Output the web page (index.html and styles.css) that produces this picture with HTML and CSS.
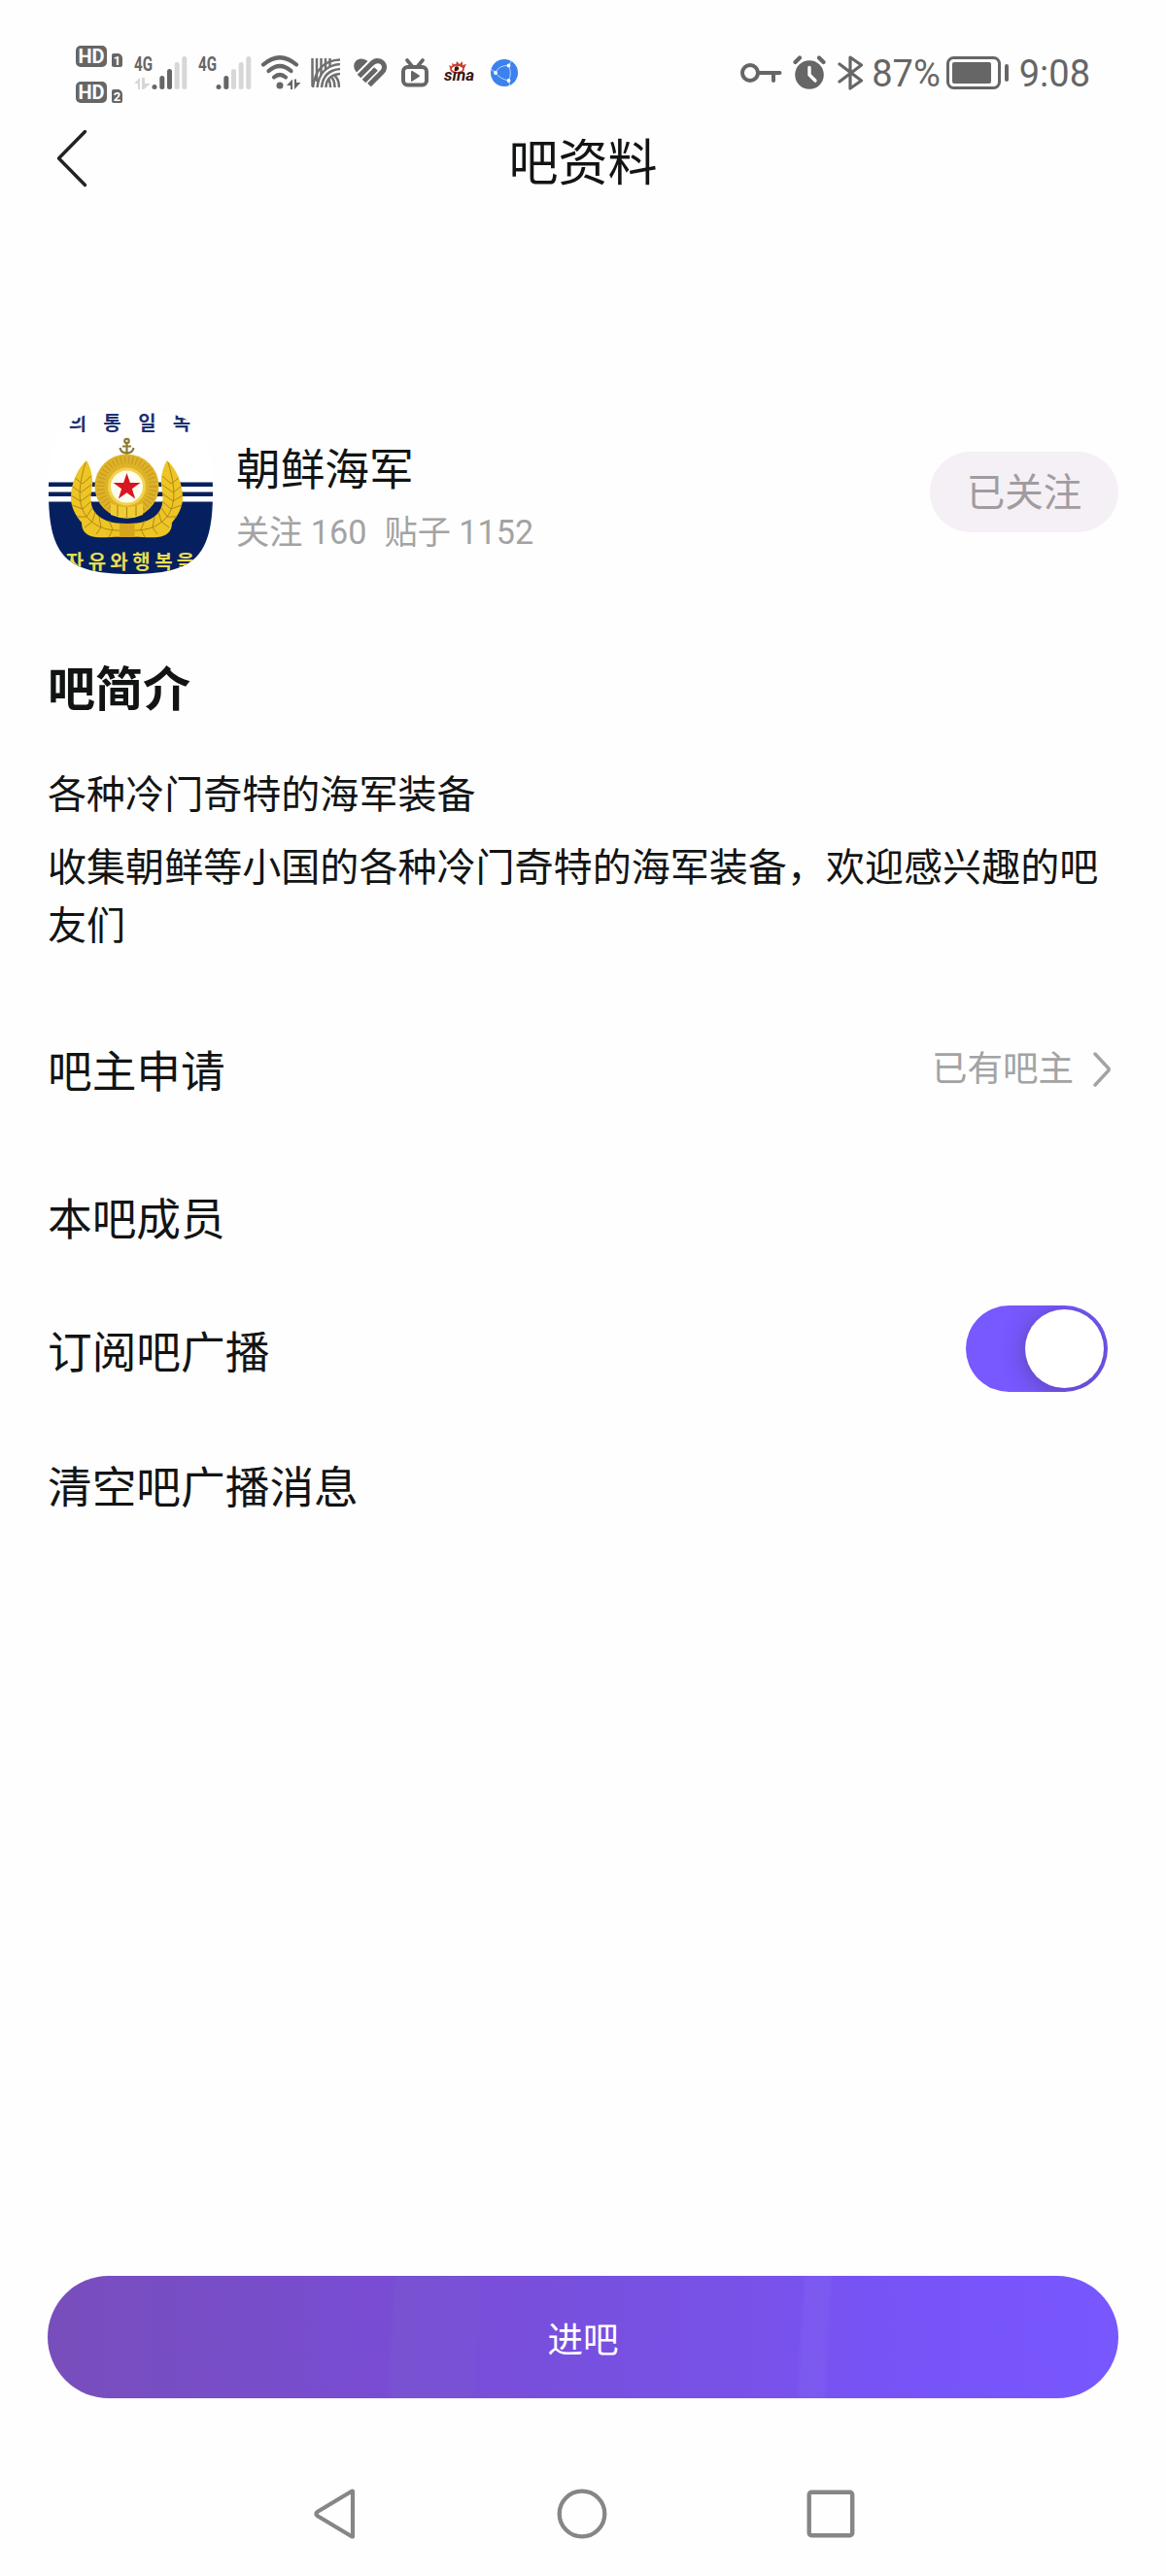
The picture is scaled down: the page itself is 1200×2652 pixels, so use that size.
FILE: index.html
```html
<!DOCTYPE html>
<html lang="zh-CN">
  <head>
    <meta charset="UTF-8" />
    <meta name="viewport" content="width=device-width, initial-scale=1.0" />
    <title>吧资料</title>
    <link rel="stylesheet" href="styles.css" />
  </head>
  <body>
    <div class="screen">
      <div class="status-bar">
        <div class="status-left">
          <div class="hd-list">
            <div class="hd-row"><span class="hd">HD</span><span class="sim">1</span></div>
            <div class="hd-row"><span class="hd">HD</span><span class="sim">2</span></div>
          </div>
          <svg class="signal" width="56" height="36" viewBox="0 0 56 36">
            <text class="net" x="0" y="16" textLength="19" lengthAdjust="spacingAndGlyphs">4G</text>
            <path class="faint" d="M0 29l6-6v12H4v-6zM8 23h3v6h6l-7 6H8z" />
            <circle cx="21" cy="32.5" r="2.5" />
            <rect x="26.300" y="21" width="5" height="14" rx="2.500" />
            <rect x="34" y="14" width="5" height="21" rx="2.500" />
            <rect class="faint" x="41.700" y="7" width="5" height="28" rx="2.500" />
            <rect class="faint" x="49.300" y="1" width="5" height="34" rx="2.500" />
          </svg>
          <svg class="signal second" width="56" height="36" viewBox="0 0 56 36">
            <text class="net" x="0" y="16" textLength="19" lengthAdjust="spacingAndGlyphs">4G</text>
            <circle cx="21" cy="32.5" r="2.5" />
            <rect x="26.300" y="21" width="5" height="14" rx="2.500" />
            <rect class="faint" x="34" y="14" width="5" height="21" rx="2.500" />
            <rect class="faint" x="41.700" y="7" width="5" height="28" rx="2.500" />
            <rect class="faint" x="49.300" y="1" width="5" height="34" rx="2.500" />
          </svg>
          <svg class="wifi" width="42" height="36" viewBox="0 0 42 36">
            <g fill="none" stroke="#666" stroke-width="4.200" stroke-linecap="round">
              <path d="M3 9.500Q20-5 37 9.500" />
              <path d="M8.500 16Q20 6 31.500 16" />
              <path d="M14 22.500Q20 17.500 26 22.500" />
            </g>
            <circle cx="20" cy="31" r="3.500" />
            <path d="M27 31l6-6.500V35h-2v-4zM35 24.500h2V28h4.500L35 35z" />
          </svg>
          <!-- woven K -->
          <svg class="app-k" width="30" height="30" viewBox="0 0 30 30">
            <g fill="none" stroke="#707070" stroke-width="2.500">
              <path d="M1.500 0v29M6 0v24M10.500 0v17M15 0v12M19.500 0v8" />
              <path d="M2 30C4 12 14 2 30 1.500M6.500 30C8 16 16 7 30 6M11 30C12 19 18 12 30 11M15.500 30c0-8 5-13 14.500-14" />
              <path d="M20 30c0-4-.500-6-1.500-8M24.500 30c0-5-1-8-3-10M29 30c0-6-2-10-4.500-12" />
            </g>
          </svg>
          <svg class="app-heart" width="34" height="30" viewBox="0 0 34 30">
            <path d="M3 14.500C-2 9 0 1 7.500 .500c3 0 5 1 7 2.500z" />
            <g fill="none" stroke="#666" stroke-width="5.200">
              <path d="M5.500 18.500L18 6c4-4.500 9-4 11.500-1.500s3 6.500-.500 10L16 27.500" />
              <path d="M10.500 23.500L23 11" />
            </g>
          </svg>
          <svg class="app-tv" width="28" height="30" viewBox="0 0 28 30">
            <rect x="2" y="9" width="24" height="18.500" rx="4.500" fill="none" stroke="#666" stroke-width="4" />
            <path d="M6 2l5 6M22 2l-5 6" stroke="#666" stroke-width="3.600" stroke-linecap="round" />
            <path d="M10 14v9q0 1.500 1.500.500l7-4.500q1-1 0-1.500l-7-4.500q-1.500-.500-1.500 1z" />
          </svg>
          <svg class="app-sina" width="32" height="30" viewBox="0 0 32 30">
            <path d="M7 12L5 7l4 2-1-4 4 2 1-4 3 3 3-3v4l4-1-2 4z" fill="#c9402f" />
            <ellipse cx="13.500" cy="11" rx="6.500" ry="4" fill="#fff" stroke="#c9402f" stroke-width="1.800" />
            <circle cx="13" cy="10.500" r="2.200" fill="#3c1512" />
            <text class="sina-text" x="0" y="22.500" textLength="31" lengthAdjust="spacingAndGlyphs">sina</text>
          </svg>
          <svg class="app-globe" width="28" height="28" viewBox="0 0 28 28">
            <circle cx="14" cy="14" r="14" fill="#3c82ee" />
            <path d="M5 14Q8 6 18.500 6.500 22 14 18.500 22 9 20 5 14M0 10l5 4M18.500 6.500L21 2M18.500 22l1 5" fill="none" stroke="#b9d6fb" stroke-width="1" />
            <g fill="#fff"><circle cx="5" cy="14" r="1.900" /><circle cx="18.500" cy="6.500" r="1.900" /><circle cx="18.500" cy="22" r="1.900" /></g>
          </svg>
        </div>
        <div class="status-right">
          <svg width="43" height="22" viewBox="0 0 43 22">
            <g fill="none" stroke="#666" stroke-width="4" stroke-linecap="round">
              <circle cx="10" cy="11" r="8" />
              <path d="M19 11h21.500M34 12v7" />
            </g>
          </svg>
          <svg class="alarm" width="34" height="36" viewBox="0 0 34 36">
            <circle cx="17" cy="20" r="14.800" />
            <path d="M2.500 7L7 2.500M31.500 7L27 2.500" stroke="#666" stroke-width="4.200" stroke-linecap="round" />
            <path d="M17 12.500V20l6 6" fill="none" stroke="#fff" stroke-width="3.400" stroke-linecap="round" />
          </svg>
          <svg class="bluetooth" width="28" height="36" viewBox="0 0 28 36">
            <path d="M2 9l22.500 17L13 34V2l11.500 8L2 27" fill="none" stroke="#666" stroke-width="3.200" stroke-linejoin="round" stroke-linecap="round" />
          </svg>
          <span class="status-text percent">87%</span>
          <svg class="battery" width="64" height="34" viewBox="0 0 64 34">
            <rect x="1.500" y="1.500" width="53" height="31" rx="6" fill="none" stroke="#666" stroke-width="3" />
            <rect x="6" y="6" width="40" height="22" rx="2" />
            <rect x="60" y="8" width="4" height="18" rx="2" />
          </svg>
          <span class="status-text">9:08</span>
        </div>
      </div>

      <div class="header">
        <svg class="back" width="34" height="62" viewBox="0 0 34 62">
          <path d="M30.500 3.500L3.500 31l27 27.500" fill="none" stroke="#222" stroke-width="3.400" stroke-linecap="round" stroke-linejoin="round" />
        </svg>
        <h1 class="title">吧资料</h1>
      </div>

      <div class="profile">
        <svg class="avatar" width="169" height="169" viewBox="0 0 169 169">
          <defs>
            <clipPath id="squircle">
              <path d="M0 84.500C0 18.200 18.200 0 84.500 0S169 18.200 169 84.500 150.800 169 84.500 169 0 150.800 0 84.500z" />
            </clipPath>
          </defs>
          <g clip-path="url(#squircle)">
            <rect width="169" height="169" fill="#fff" />
            <path d="M0 74.500h169v4.500H0zM0 84.500h169v4.500H0zM0 94.500h169V169H0z" fill="#06205f" />
            <g class="flag-text navy">
              <text x="30" y="20.500">의</text>
              <text x="65.500" y="20.500">통</text>
              <text x="101.500" y="20.500">일</text>
              <text x="137" y="20.500">녹</text>
            </g>
            <!-- anchor -->
            <g fill="none" stroke="#8d7a35" stroke-width="2.200">
              <circle cx="80.500" cy="32" r="2.200" />
              <path d="M80.500 34v12M76 37.500h9M73.500 39q1 5.500 7 5.500t7-5.500" />
            </g>
            <!-- wreath -->
            <g id="wreath">
              <path d="M39 52C29 61 23 76 23 91c0 8 4 17 11 25 0 9 5 14 15 15 10 1 20-1 31 0v-14c-15 0-24-3-31-10-7-8-6-18-4-29 1-9-2-20-6-26z" fill="#edc524" />
              <g fill="none" stroke="#b0861a" stroke-width="1">
                <path d="M38 54C29 84 28 108 52 120q10 5 28 4" />
                <path d="M27 70l8 6 9-8M25 79l8 6 11-8M23 88l10 6 11-8M24 98l11 4 9-8M29 110l10 0 6-9M37 121l8-6 3-10M49 128l5-7-2-11M62 131l4-8-4-9" />
              </g>
            </g>
            <use href="#wreath" transform="matrix(-1 0 0 1 161 0)" />
            <rect x="73" y="117" width="15.500" height="14" fill="#d6a51d" />
            <circle cx="80.500" cy="78.500" r="33" fill="#dfb328" />
            <circle cx="80.500" cy="78.500" r="27" fill="none" stroke="#cc9f24" stroke-width="8" stroke-dasharray="1.500 2.500" />
            <path d="M64 96q16 8 33 0v12q-16 7-33 0z" fill="#f1cd35" />
            <path d="M71 98v11M80.500 100v11M90 98v11" stroke="#b48818" stroke-width="1.200" />
            <circle cx="80.500" cy="79" r="18" fill="#fffdf1" stroke="#f3d34e" stroke-width="3" />
            <path d="M80.500 65l3.400 10h10.600l-8.600 6.300 3.300 10.200-8.700-6.200-8.700 6.200 3.300-10.200L66.500 75h10.600z" fill="#d81521" />
            <g class="flag-text yellow">
              <text x="27" y="163.500">자</text>
              <text x="50" y="163.500">유</text>
              <text x="72.500" y="163.500">와</text>
              <text x="95.500" y="163.500">행</text>
              <text x="118.500" y="163.500">복</text>
              <text x="141" y="163.500">을</text>
            </g>
          </g>
        </svg>
        <div class="profile-info">
          <div class="name">朝鲜海军</div>
          <div class="meta"><span>关注 160</span><span>贴子 1152</span></div>
        </div>
        <button class="follow">已关注</button>
      </div>

      <div class="intro">
        <h2>吧简介</h2>
        <p>各种冷门奇特的海军装备</p>
        <p>收集朝鲜等小国的各种冷门奇特的海军装备，欢迎感兴趣的吧友们</p>
      </div>

      <div class="list">
        <div class="row apply">
          <span>吧主申请</span>
          <span class="row-value">
            已有吧主
            <svg width="20" height="38" viewBox="0 0 20 38">
              <path d="M3 3l13.500 14.500q1.500 1.500 0 3L3 35" fill="none" stroke="#a3a3a3" stroke-width="3.400" stroke-linecap="round" />
            </svg>
          </span>
        </div>
        <div class="row members"><span>本吧成员</span></div>
        <div class="row subscribe">
          <span>订阅吧广播</span>
          <span class="toggle"><span class="knob"></span></span>
        </div>
        <div class="row clear"><span>清空吧广播消息</span></div>
      </div>

      <button class="enter">进吧</button>

      <div class="nav-bar">
        <svg width="46" height="54" viewBox="0 0 46 54">
          <path d="M42 4v46q0 1-1.500 0L5.500 29q-2-2 0-4L40.500 4q1.500-1 1.500 0z" fill="none" stroke="#868686" stroke-width="4.200" stroke-linejoin="round" />
        </svg>
        <svg width="52" height="52" viewBox="0 0 52 52">
          <circle cx="26" cy="26" r="23.300" fill="none" stroke="#868686" stroke-width="4.300" />
        </svg>
        <svg width="50" height="50" viewBox="0 0 50 50">
          <rect x="2.700" y="2.700" width="44.500" height="44.500" rx="2.500" fill="none" stroke="#868686" stroke-width="4.400" />
        </svg>
      </div>
    </div>
  </body>
</html>
```
FILE: styles.css
```css
body {
  margin: 0;
  background-color: #fefefe;
  color: #121414;
  font-family: Roboto, "Noto Sans CJK SC", sans-serif;
}

h1,
h2,
p {
  margin: 0;
}

button {
  border: none;
  padding: 0;
  font-family: inherit;
}

svg {
  display: block;
  flex-shrink: 0;
}

.screen {
  display: flex;
  flex-direction: column;
  width: 1200px;
  height: 2652px;
}

/* status bar */
.status-bar {
  display: flex;
  justify-content: space-between;
  height: 90px;
  padding: 30px 78px 0;
  color: #666;
  fill: #666;
}

.status-left,
.status-right {
  display: flex;
  align-items: center;
}

.hd-list {
  display: flex;
  flex-direction: column;
  gap: 15px;
  margin-top: 3px;
}

.hd-row {
  display: flex;
  align-items: flex-end;
  gap: 5px;
}

.hd,
.sim {
  background-color: #666;
  color: #fff;
  font-weight: 700;
  text-align: center;
}

.hd {
  width: 32px;
  height: 22px;
  border-radius: 5px;
  font-size: 20px;
  line-height: 22px;
}

.sim {
  width: 11px;
  height: 14px;
  border-radius: 2px 5px 2px 2px;
  font-size: 13px;
  line-height: 15px;
}

.signal {
  margin-left: 12px;
  overflow: visible;
}

.second {
  margin-left: 10px;
}

.net {
  font-size: 21px;
  font-weight: 700;
}

.faint {
  fill: #d8d6d8;
}

.wifi {
  margin-left: 8px;
}

.app-k {
  margin-left: 10px;
}

.app-heart {
  margin-left: 14px;
}

.app-tv {
  margin-left: 15px;
}

.app-sina {
  margin-left: 16px;
}

.sina-text {
  font-size: 16px;
  font-weight: 700;
  font-style: italic;
  fill: #3c1512;
}

.app-globe {
  margin-left: 16px;
}

.alarm {
  margin-left: 11px;
}

.bluetooth {
  margin-left: 12px;
}

.status-text {
  padding-top: 2px;
  font-size: 38px;
  line-height: 44px;
}

.percent {
  margin-left: 7px;
}

.battery {
  margin: 0 11px 0 6px;
}

/* header */
.header {
  display: grid;
  grid-template-columns: 200px 1fr 200px;
  align-items: center;
  height: 96px;
}

.back {
  margin: -10px 0 0 57px;
}

.title {
  padding-top: 2px;
  text-align: center;
  font-size: 51px;
  font-weight: 400;
  line-height: 60px;
}

/* profile */
.profile {
  display: flex;
  align-items: center;
  padding: 206px 49px 0 50px;
}

.flag-text {
  font-family: "Noto Sans CJK KR", sans-serif;
  font-size: 20px;
  font-weight: 700;
  text-anchor: middle;
}

.navy {
  fill: #1c3170;
}

.yellow {
  fill: #e9dc52;
}

.profile-info {
  flex: 1;
  margin-left: 24px;
  padding-top: 11px;
}

.name {
  font-size: 45.7px;
  line-height: 64px;
}

.meta {
  display: flex;
  gap: 18px;
  margin-top: 7px;
  color: #a3a3a3;
  font-size: 34.2px;
  line-height: 48px;
}

.follow {
  width: 194px;
  height: 83px;
  padding-top: 3px;
  border-radius: 42px;
  background-color: #f5f0f5;
  color: #a09ca0;
  font-size: 39.5px;
  line-height: 80px;
}

/* intro */
.intro {
  padding: 90px 49px 0;
}

.intro h2 {
  margin-bottom: 48px;
  font-size: 49px;
  line-height: 60px;
}

.intro p {
  margin-bottom: 15px;
  font-size: 40.05px;
  line-height: 60px;
}

/* settings list */
.list {
  padding: 61px 49px 0;
}

.row {
  display: flex;
  align-items: center;
  justify-content: space-between;
  height: 90px;
  font-size: 45.7px;
  line-height: 60px;
}

.members {
  margin-top: 62px;
}

.subscribe {
  margin-top: 47px;
}

.clear {
  margin-top: 49px;
}

.row-value {
  display: flex;
  align-items: center;
  gap: 19px;
  margin: -8px 7px 0 0;
  color: #a3a3a3;
  font-size: 36.5px;
}

.toggle {
  display: flex;
  align-items: center;
  justify-content: flex-end;
  box-sizing: border-box;
  width: 146px;
  height: 89px;
  margin: -11px 11px 0 0;
  padding-right: 4px;
  border-radius: 45px;
  background-color: #7858ff;
  overflow: hidden;
}

.knob {
  width: 81px;
  height: 81px;
  border-radius: 50%;
  background-color: #fff;
  box-shadow: 0 3px 22px rgba(60, 50, 90, 0.5);
}

/* bottom */
.enter {
  height: 126px;
  margin: auto 49px 0;
  border-radius: 63px;
  background:
    linear-gradient(93deg, transparent 32%, rgba(120, 100, 200, 0.25) 32.500%, rgba(120, 100, 200, 0.15) 40%, transparent 40.500%),
    linear-gradient(93deg, transparent 70%, rgba(130, 100, 240, 0.4) 70.500%, rgba(130, 100, 240, 0.4) 72.500%, transparent 73%),
    linear-gradient(90deg, #784ebc 0%, #784dca 20%, #794cd4 32%, #7850df 50%, #7852ea 68%, #7753f5 76%, #7857ff 100%);
  color: #fff;
  font-size: 36.5px;
}

.nav-bar {
  display: flex;
  justify-content: space-between;
  align-items: center;
  height: 116px;
  padding: 61px 320px 6px 321px;
}
```
